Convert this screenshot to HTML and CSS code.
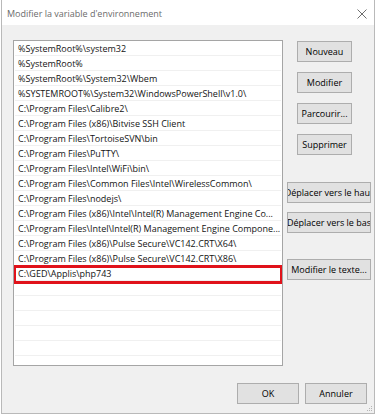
FILE: index.html
```html
<!DOCTYPE html>
<html lang="fr">
<head>
    <meta charset="UTF-8">
    <meta name="viewport" content="width=device-width, initial-scale=1.0">
    <title>Modifier la variable d'environnement</title>
    <link rel="stylesheet" href="styles.css">
</head>
<body>
    <!-- Fenêtre de dialogue -->
    <div class="dialog">
        <div class="titlebar">
            <span class="title">Modifier la variable d'environnement</span>
            <svg class="close" width="10" height="10" viewBox="0 0 10 10">
                <path d="M0.5 0.5 L9.5 9.5 M9.5 0.5 L0.5 9.5" stroke="#6e6e6e" stroke-width="1" fill="none"/>
            </svg>
        </div>

        <div class="content">
            <div class="main">
                <!-- Liste des chemins -->
                <div class="pathlist">
                    <div class="row">%SystemRoot%\system32</div>
                    <div class="row">%SystemRoot%</div>
                    <div class="row">%SystemRoot%\System32\Wbem</div>
                    <div class="row">%SYSTEMROOT%\System32\WindowsPowerShell\v1.0\</div>
                    <div class="row">C:\Program Files\Calibre2\</div>
                    <div class="row">C:\Program Files (x86)\Bitvise SSH Client</div>
                    <div class="row">C:\Program Files\TortoiseSVN\bin</div>
                    <div class="row">C:\Program Files\PuTTY\</div>
                    <div class="row">C:\Program Files\Intel\WiFi\bin\</div>
                    <div class="row">C:\Program Files\Common Files\Intel\WirelessCommon\</div>
                    <div class="row">C:\Program Files\nodejs\</div>
                    <div class="row">C:\Program Files (x86)\Intel\Intel(R) Management Engine Co...</div>
                    <div class="row">C:\Program Files\Intel\Intel(R) Management Engine Compone...</div>
                    <div class="row">C:\Program Files (x86)\Pulse Secure\VC142.CRT\X64\</div>
                    <div class="row">C:\Program Files (x86)\Pulse Secure\VC142.CRT\X86\</div>
                    <div class="row selected">C:\GED\Applis\php743</div>
                    <div class="row"></div>
                    <div class="row"></div>
                    <div class="row"></div>
                    <div class="row"></div>
                    <div class="row"></div>
                    <div class="row"></div>
                </div>

                <!-- Boutons d'action -->
                <div class="actions">
                    <button class="btn btn-small">Nouveau</button>
                    <button class="btn btn-small gap">Modifier</button>
                    <button class="btn btn-small gap">Parcourir...</button>
                    <button class="btn btn-small gap">Supprimer</button>
                    <button class="btn btn-wide gap-up">Déplacer vers le haut</button>
                    <button class="btn btn-wide gap-down">Déplacer vers le bas</button>
                    <button class="btn btn-wide gap-edit">Modifier le texte...</button>
                </div>
            </div>

            <div class="footer">
                <button class="btn btn-footer">OK</button>
                <button class="btn btn-footer">Annuler</button>
            </div>
        </div>

        <svg class="grip" width="7" height="7" viewBox="0 0 7 7">
            <rect x="5" y="1" width="1" height="1" fill="#b5b5b5"/>
            <rect x="3" y="3" width="1" height="1" fill="#b5b5b5"/>
            <rect x="5" y="3" width="1" height="1" fill="#b5b5b5"/>
            <rect x="1" y="5" width="1" height="1" fill="#b5b5b5"/>
            <rect x="3" y="5" width="1" height="1" fill="#b5b5b5"/>
            <rect x="5" y="5" width="1" height="1" fill="#b5b5b5"/>
        </svg>
    </div>
</body>
</html>
```

FILE: styles.css
```css
* {
    box-sizing: border-box;
}
body {
    font-family: "Open Sans", "Noto Sans", sans-serif;
    font-size: 9px;
    margin: 0;
    padding: 0;
    background-color: #ffffff;
}
.dialog {
    position: relative;
    margin-left: 1px;
    width: 374px;
    height: 414px;
    border: 1px solid #b9b9b9;
    border-top: none;
    background-color: #f0f0f0;
}
.titlebar {
    height: 25px;
    background-color: #ffffff;
    display: flex;
    align-items: center;
    justify-content: space-between;
    padding: 2px 7px 0 5px;
}
.title {
    color: #6b6b6b;
    font-size: 9px;
}
.close {
    display: block;
}
.main {
    display: flex;
    padding: 15px 0 0 11px;
}
.pathlist {
    width: 270px;
    height: 326px;
    background-color: #ffffff;
    border: 1px solid #a5a5a5;
    overflow: hidden;
    padding: 0 1px;
}
.row {
    position: relative;
    height: 15px;
    line-height: 15px;
    padding-left: 3px;
    color: #141414;
    border-bottom: 1px solid #f0f0f0;
    white-space: nowrap;
    overflow: hidden;
    text-overflow: ellipsis;
}
.row.selected {
    overflow: visible;
}
.row.selected::after {
    content: "";
    position: absolute;
    top: -1px;
    bottom: -4px;
    left: -2px;
    right: -2px;
    border: 3px solid #e0121a;
}
.actions {
    width: 84px;
    margin-left: 4px;
    padding-top: 1px;
    display: flex;
    flex-direction: column;
    align-items: flex-start;
}
.btn {
    height: 21px;
    padding: 0;
    font-family: inherit;
    font-size: 9px;
    color: #000000;
    background-color: #e1e1e1;
    border: 1px solid #adadad;
    display: flex;
    align-items: center;
    justify-content: center;
    white-space: nowrap;
    overflow: hidden;
}
.btn-small {
    width: 55px;
    margin-left: 10px;
}
.btn-wide {
    width: 84px;
}
.gap {
    margin-top: 10px;
}
.gap-up {
    margin-top: 27px;
}
.gap-down {
    margin-top: 9px;
}
.gap-edit {
    margin-top: 26px;
}
.footer {
    display: flex;
    justify-content: flex-end;
    gap: 6px;
    padding: 17px 7px 0 0;
}
.btn-footer {
    width: 62px;
}
.grip {
    position: absolute;
    right: 1px;
    bottom: 1px;
}
```
